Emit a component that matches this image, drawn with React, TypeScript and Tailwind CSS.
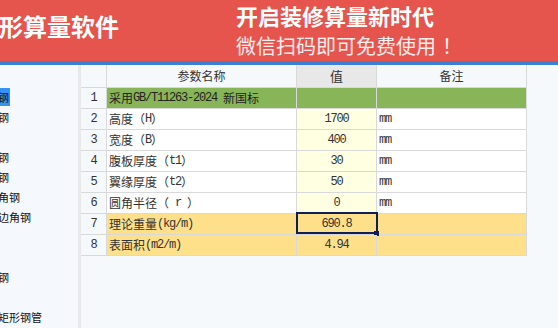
import React from 'react';

type Row = { no: number; name: string; value: string; note: string; tone: 'green' | 'plain' | 'orange' };

const ROWS: Row[] = [
  { no: 1, name: '采用GB/T11263-2024\u00a0新国标', value: '', note: '', tone: 'green' },
  { no: 2, name: '高度（H）', value: '1700', note: 'mm', tone: 'plain' },
  { no: 3, name: '宽度（B）', value: '400', note: 'mm', tone: 'plain' },
  { no: 4, name: '腹板厚度（t1）', value: '30', note: 'mm', tone: 'plain' },
  { no: 5, name: '翼缘厚度（t2）', value: '50', note: 'mm', tone: 'plain' },
  { no: 6, name: '圆角半径（\u00a0r\u00a0）', value: '0', note: 'mm', tone: 'plain' },
  { no: 7, name: '理论重量(kg/m)', value: '690.8', note: '', tone: 'orange' },
  { no: 8, name: '表面积(m2/m)', value: '4.94', note: '', tone: 'orange' },
];

// tree is scrolled sideways, so only the tail of longer names shows
const TREE = ['工字钢', 'Ｈ型钢', '槽钢', 'Ｔ型钢', 'Ｃ型钢', '等边角钢', '不等边角钢', '扁钢', '圆钢', '六角钢', '钢管', '冷弯矩形钢管'];

const CJK = { fontFamily: '"Noto Sans CJK SC", "Noto Sans", sans-serif' };
const MONO = { fontFamily: '"Liberation Mono", "DejaVu Sans Mono", monospace' };

// half-width runs get the narrow mono look of the original grid font
function Mixed({ text }: { text: string }) {
  const parts = text.split(/([\x20-\x7e\u00a0]+)/).filter(Boolean);
  return (
    <>
      {parts.map((p, i) =>
        /^[\x20-\x7e\u00a0]+$/.test(p) ? (
          <span key={i} className="tracking-[-1.2px]" style={MONO}>{p}</span>
        ) : (
          <span key={i} style={CJK}>{p}</span>
        )
      )}
    </>
  );
}

export default function App() {
  return (
    <div className="w-[558px] h-[328px] overflow-hidden flex flex-col bg-[#f5f9fd]" style={CJK}>
      {/* Banner */}
      <div className="h-[61px] shrink-0 bg-[#e5544d] flex items-start text-white">
        <div className="w-[237px] shrink-0 -ml-[1px] mt-[13px] text-[24px] leading-[26px] font-bold whitespace-nowrap">形算量软件</div>
        <div className="flex flex-col shrink-0">
          <div className="mt-[2px] text-[22px] leading-[26px] font-bold whitespace-nowrap">开启装修算量新时代</div>
          <div className="mt-[6px] text-[20px] leading-[24px] text-white/90 whitespace-nowrap">微信扫码即可免费使用<span className="ml-[6px]">！</span></div>
        </div>
      </div>
      <div className="h-[4px] shrink-0 bg-[#3c80d6]" />

      <div className="flex flex-1 min-h-0">
        {/* Tree panel */}
        <div className="w-[78px] shrink-0 overflow-hidden pt-[22px] bg-[#f5f9fd]">
          <div className="-ml-[24px] flex flex-col">
            {TREE.map((t, i) => (
              <div key={i} className="h-[20px] flex items-center">
                <span className={`text-[11px] leading-[18px] whitespace-nowrap text-[#111] ${i === 0 ? 'bg-[#3394f5] pr-[1px]' : ''}`}>{t}</span>
              </div>
            ))}
          </div>
        </div>
        <div className="w-[3px] shrink-0 bg-[#e8e8e8]" />

        {/* Parameter table */}
        <div className="flex-1 bg-[#f5f9fc]">
          <div className="w-[446px] border-r border-[#d9d9d9]">
            <div className="flex h-[23px] border-b border-[#d9d9d9] text-[12px] text-[#333]">
              <div className="w-[26px] border-r border-[#d9d9d9]" />
              <div className="w-[190px] border-r border-[#d9d9d9] flex items-center justify-center">参数名称</div>
              <div className="w-[80px] border-r border-[#d9d9d9] bg-[#e8e8e8] flex items-center justify-center text-[13px]">值</div>
              <div className="flex-1 flex items-center justify-center">备注</div>
            </div>
            {ROWS.map(r => {
              const nameBg = r.tone === 'green' ? 'bg-[#88b558]' : r.tone === 'orange' ? 'bg-[#fee08b]' : 'bg-white';
              const valBg = r.tone === 'green' ? 'bg-[#88b558]' : r.tone === 'orange' ? 'bg-[#fee08b]' : 'bg-[#ffffe1]';
              return (
                <div key={r.no} className="flex h-[21px] border-b border-[#d9d9d9] text-[12px] text-[#333]">
                  <div className="w-[26px] border-r border-[#d9d9d9] flex items-center justify-center"><Mixed text={String(r.no)} /></div>
                  <div className={`w-[190px] border-r border-[#d9d9d9] flex items-center pl-[2px] whitespace-nowrap ${nameBg} ${r.tone === 'green' ? 'text-[#222]' : ''}`}>
                    <Mixed text={r.name} />
                  </div>
                  <div className={`relative w-[80px] border-r border-[#d9d9d9] flex items-center justify-center ${valBg}`}>
                    <Mixed text={r.value} />
                    {r.no === 7 && (
                      <>
                        <div className="absolute -left-[1px] -right-[2px] -top-[2px] bottom-0 border-2 border-[#0f1e55]" />
                        <div className="absolute -right-[3px] -bottom-[2px] w-[5px] h-[5px] bg-[#0f1e55]" />
                      </>
                    )}
                  </div>
                  <div className={`flex-1 flex items-center pl-[2px] ${r.tone === 'plain' ? 'bg-white' : valBg}`}><Mixed text={r.note} /></div>
                </div>
              );
            })}
          </div>
        </div>
      </div>
    </div>
  );
}
